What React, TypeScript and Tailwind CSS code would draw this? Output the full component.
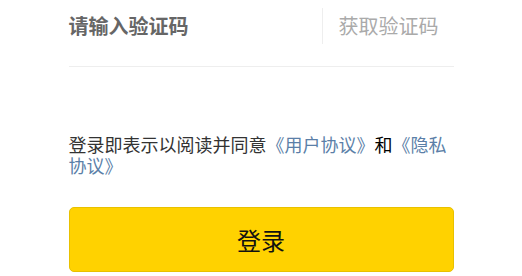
export default function App() {
  return (
    <div
      className="w-[522px] h-[276px] bg-white overflow-hidden"
      style={{ fontFamily: '"Noto Sans CJK SC", "Noto Sans", sans-serif' }}
    >
      <div className="w-[385px] mx-auto">
        {/* Code input row */}
        <div className="flex items-center h-[52px]">
          <span className="flex-1 text-[20px] font-bold text-[#666] leading-none">
            请输入验证码
          </span>
          <div className="w-px h-[36px] bg-[#eee]" />
          <button className="pl-4 pr-[15px] text-[20px] text-[#aaa] leading-none">
            获取验证码
          </button>
        </div>
        <div className="mt-[14px] h-px bg-[#eee]" />

        {/* Agreement */}
        <p className="mt-[67px] text-[18px] leading-[21px] text-[#333]">
          登录即表示以阅读并同意
          <a className="text-[#5b7fa8]">《用户协议》</a>
          <span className="text-black">和</span>
          <a className="text-[#5b7fa8]">《隐私协议》</a>
        </p>

        {/* Submit */}
        <button className="mt-[31px] w-full h-[65px] rounded-[5px] bg-[#ffd200] border border-[#e8c100] text-[24px] text-[#111] flex items-center justify-center">
          登录
        </button>
      </div>
    </div>
  );
}
